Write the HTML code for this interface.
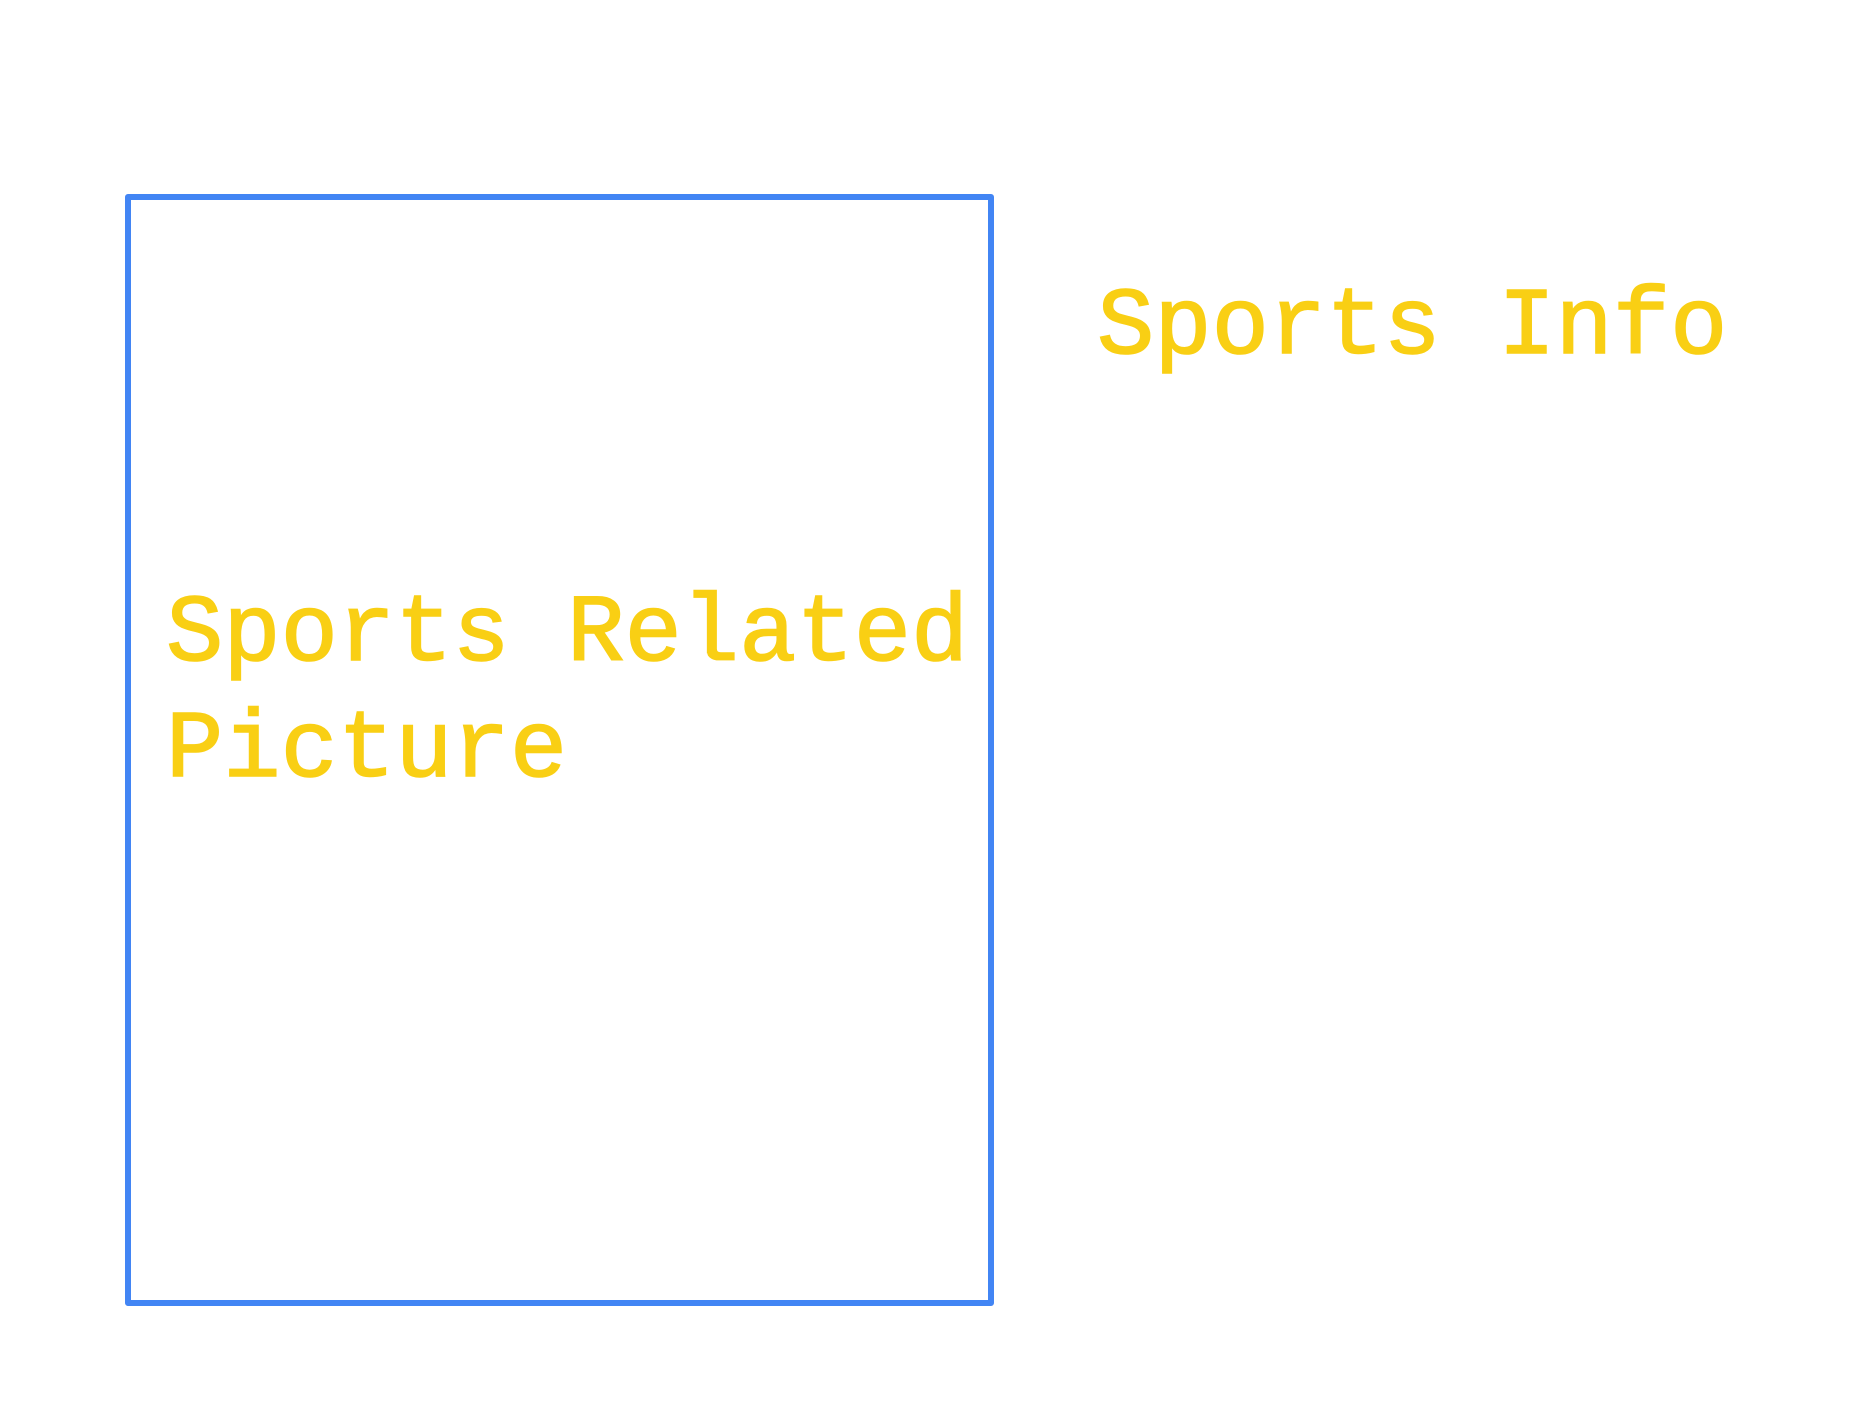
<!DOCTYPE html>
<html><head><meta charset="utf-8"><style>
html,body{margin:0;padding:0;background:#fff;width:1868px;height:1401px;overflow:hidden}
.box{position:absolute;left:125px;top:194px;width:869px;height:1112px;border:6px solid #4285f4;border-radius:3px;box-sizing:border-box}
.t{position:absolute;font-family:"Liberation Mono",monospace;font-size:95.5px;line-height:115.6px;color:#f9cf14;white-space:pre;-webkit-text-stroke:1.6px #f9cf14}
</style></head><body>
<div class="box"></div>
<div class="t" style="left:166px;top:577px">Sports Related
Picture</div>
<div class="t" style="left:1097px;top:270px">Sports Info</div>
</body></html>
